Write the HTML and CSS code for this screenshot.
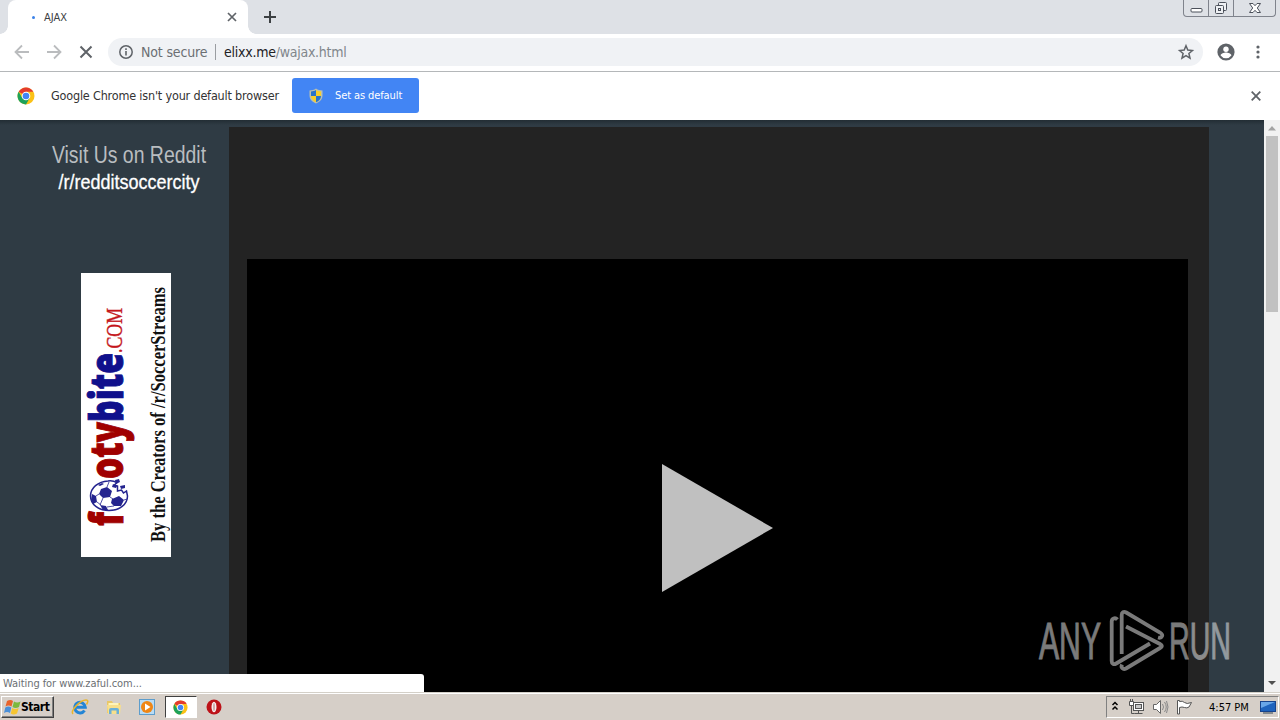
FILE: index.html
```html
<!DOCTYPE html>
<html lang="en">
<head>
    <meta charset="UTF-8">
    <title>AJAX</title>
    <link rel="stylesheet" href="styles.css">
</head>
<body>
    <!-- Tabs -->
    <div class="tabstrip">
        <div class="tab">
            <span class="spinner"></span>
            <span class="tab-title">AJAX</span>
            <svg class="tab-close" width="10" height="10" viewBox="0 0 10 10"><path d="M1 1l8 8M9 1L1 9" stroke="#5f6368" stroke-width="1.7"/></svg>
        </div>
        <svg class="new-tab" width="12" height="12" viewBox="0 0 12 12"><path d="M6 0v12M0 6h12" stroke="#3c4043" stroke-width="2"/></svg>
        <div class="window-buttons">
            <span><svg width="13" height="16" viewBox="0 0 13 16"><rect x="1" y="8.5" width="11" height="3.5" rx="1" fill="#fff" stroke="#4b505a"/></svg></span>
            <span><svg width="14" height="16" viewBox="0 0 14 16"><g fill="#eef0f3" stroke="#4b505a"><rect x="4.500" y="2.500" width="8" height="8" rx="1"/><rect x="1.500" y="5.500" width="8" height="8" rx="1"/><rect x="4.500" y="8.500" width="2" height="2"/></g></svg></span>
            <span class="wide"><svg width="12" height="16" viewBox="0 0 12 16"><path d="M.5 3.500h3.500L6 5.700l2-2.200h3.500L8.300 8l3.200 4.500H8L6 10.300l-2 2.200H.5L3.700 8z" fill="#fff" stroke="#4b505a"/></svg></span>
        </div>
    </div>

    <!-- Toolbar -->
    <div class="toolbar">
        <svg class="nav" width="16" height="16" viewBox="0 0 16 16"><path d="M15 8H2M8 1.500L1.500 8 8 14.500" fill="none" stroke="#babcbe" stroke-width="1.800"/></svg>
        <svg class="nav" width="16" height="16" viewBox="0 0 16 16"><path d="M1 8h13M8 1.500L14.500 8 8 14.500" fill="none" stroke="#babcbe" stroke-width="1.800"/></svg>
        <svg class="nav" width="16" height="16" viewBox="0 0 16 16"><path d="M2.500 2.500l11 11M13.500 2.500l-11 11" stroke="#5f6368" stroke-width="2"/></svg>
        <div class="omnibox">
            <svg width="14" height="14" viewBox="0 0 14 14"><circle cx="7" cy="7" r="6.200" fill="none" stroke="#5f6368" stroke-width="1.500"/><path d="M7 6v4.500M7 3.300v1.600" stroke="#5f6368" stroke-width="1.600"/></svg>
            <span class="secure">Not secure</span>
            <span class="divider"></span>
            <span class="url"><b>elixx.me</b>/wajax.html</span>
            <svg class="star" width="16" height="16" viewBox="0 0 16 16"><path d="M8 1.800l1.800 4.300 4.600.4-3.500 3 1.100 4.600L8 11.600l-4 2.500 1.100-4.600-3.500-3 4.600-.4z" fill="none" stroke="#5f6368" stroke-width="1.500"/></svg>
        </div>
        <svg class="avatar" width="18" height="18" viewBox="0 0 18 18"><circle cx="9" cy="9" r="8.600" fill="#5f6368"/><circle cx="9" cy="6.300" r="2.700" fill="#fff"/><path d="M3.600 12.500c0-2 3.600-3 5.400-3s5.400 1 5.400 3A6.600 6.600 0 0 1 9 15.200a6.600 6.600 0 0 1-5.400-2.700z" fill="#fff"/></svg>
        <svg class="dots" width="4" height="14" viewBox="0 0 4 14"><g fill="#5f6368"><circle cx="2" cy="2" r="1.600"/><circle cx="2" cy="7" r="1.600"/><circle cx="2" cy="12" r="1.600"/></g></svg>
    </div>

    <!-- Default browser prompt -->
    <div class="infobar">
        <svg width="18" height="18" viewBox="0 0 18 18">
            <circle cx="9" cy="9" r="8.500" fill="#fbc116"/>
            <path d="M9 9L1.640 4.750A8.500 8.500 0 0 1 16.360 4.750L9 4.750z" fill="#e33b2e"/>
            <path d="M9 9L5.300 11.100 1.640 4.750A8.500 8.500 0 0 0 9 17.500l3.700-6.400z" fill="#1da25a"/>
            <circle cx="9" cy="9" r="4.300" fill="#fff"/><circle cx="9" cy="9" r="3.300" fill="#4285f4"/>
        </svg>
        <span class="infobar-text">Google Chrome isn't your default browser</span>
        <div class="default-button">
            <svg width="14" height="16" viewBox="0 0 14 16">
                <path d="M7 .5c2 1.400 4 1.900 6.500 2v5c0 3.500-2.500 6.500-6.500 8-4-1.500-6.500-4.500-6.500-8v-5C3 2.400 5 1.900 7 .5z" fill="#b9bfb0"/>
                <path d="M7 2v6H2V3.500C4 3.400 5.500 3 7 2zM7 8h5c0 3-2 5-5 6.300z" fill="#2873c9"/>
                <path d="M7 2v6h5V3.500C10 3.400 8.500 3 7 2zM7 8H2c0 3 2 5 5 6.300z" fill="#f7ce29"/>
            </svg>
            <span>Set as default</span>
        </div>
        <svg class="infobar-close" width="10" height="10" viewBox="0 0 10 10"><path d="M.7.7l8.600 8.600M9.300.7L.7 9.300" stroke="#5f6368" stroke-width="1.800"/></svg>
    </div>

    <!-- Page content -->
    <div class="page">
        <div class="sidebar">
            <div class="visit">Visit Us on Reddit</div>
            <div class="subreddit">/r/redditsoccercity</div>
            <svg class="banner" width="90" height="284" viewBox="0 0 90 284">
                <rect width="90" height="284" fill="#fff"/>
                <g transform="rotate(-90)" class="logo-text">
                    <text class="red" x="-253" y="42" textLength="14" lengthAdjust="spacingAndGlyphs">f</text>
                    <text class="red" x="-206" y="42" textLength="57" lengthAdjust="spacingAndGlyphs">oty</text>
                    <text class="blue" x="-149" y="42" textLength="69" lengthAdjust="spacingAndGlyphs">bite</text>
                    <text class="com" x="-80" y="41" textLength="45" lengthAdjust="spacingAndGlyphs">.COM</text>
                    <text class="tagline" x="-269" y="84" textLength="255" lengthAdjust="spacingAndGlyphs">By the Creators of /r/SoccerStreams</text>
                </g>
                <!-- bitten football -->
                <path d="M36 209.500C33 208 30 207.500 27 208c-10 .5-17.500 7-17.500 15 0 8.500 8 14.500 18.500 14.500s18.500-6 18.500-14.500l-1-5-3 2-2-3-4 1v-5l-3-1z" fill="#fff" stroke="#24248f" stroke-width="1.500"/>
                <path d="M20 216l6-2 5 4-2 6-7 1-4-4zM11 221l4 2 1 6-4 2-2-4zM31 226l7-3 5 4-3 6-7 0-3-3zM19 232l6 1 2 4-5 0zM17 212l4-2 2 1-4 2z" fill="#24248f"/>
                <path d="M18 221l-3 2M29 224l3 2M22 225l-3 7M43 227l3-1M16 229l4 3M33 233l-7 1M26 214l2-5" stroke="#24248f" stroke-width=".8"/>
                <path d="M34 207l4-1 1 3-4 2zM39 213l5-1v3l-4 1zM32 211l4 2-1 2-4-1z" fill="#24248f"/>
            </svg>
        </div>
        <div class="main">
            <div class="player">
                <svg width="111" height="128" viewBox="0 0 111 128"><path d="M0 0l111 64L0 128z" fill="#c0c0c0"/></svg>
            </div>
        </div>
        <div class="scrollbar">
            <svg width="16" height="16" viewBox="0 0 16 16"><path d="M4 10.500l4-4.500 4 4.500z" fill="#a3a3a3"/></svg>
            <div class="thumb"></div>
            <svg class="down" width="16" height="16" viewBox="0 0 16 16"><path d="M4 5l4 4 4-4z" fill="#505050"/></svg>
        </div>
        <div class="status">Waiting for www.zaful.com...</div>
        <svg class="watermark" width="194" height="64" viewBox="0 0 194 64">
            <text x="1" y="50" textLength="62" lengthAdjust="spacingAndGlyphs">ANY</text>
            <text x="131" y="50" textLength="62" lengthAdjust="spacingAndGlyphs">RUN</text>
            <path d="M79.500 10.500c-2.500-2.500-5.800-1-5.800 2V52c0 3 2 4 4.500 2.500L112 34.500M83.700 45V6c0-3 2-4 4.500-2.500L122 23.500c4 2.500 2 6-2 5M88 17.500l34 17.500c2.500 1.300 2.500 2.500 0 4L88 59.500c-3 1.500-5.500-1-4-4" fill="none" stroke="#fff" stroke-width="3.800"/>
        </svg>
    </div>

    <!-- Taskbar -->
    <div class="taskbar">
        <div class="start">
            <svg width="17" height="16" viewBox="0 0 17 16">
                <path d="M3 2q3.500-2 6 0L7.500 7.500q-3-2-6 0z" fill="#e8632b"/><path d="M10 2.500q3 2 6.500 0L15 8q-3.500 2-6.500 0z" fill="#7cb93e"/>
                <path d="M1.300 8.500q3-2 6 0L6 14q-3-2-6 0z" fill="#4a8fd8"/><path d="M8.200 9q3 2 6.500 0L13 14.500q-3.500 2-6.300 0z" fill="#f6c531"/>
            </svg>
            <span>Start</span>
        </div>
        <div class="task">
            <svg width="18" height="18" viewBox="0 0 18 18"><path d="M13.500 12.500A5.300 5.300 0 1 1 14.300 9.300H5" fill="none" stroke="#2385d5" stroke-width="3"/><path d="M2 16C-1 13 9 2 15 2c3 0 1.500 3 .5 4.500" fill="none" stroke="#e9b52c" stroke-width="1.500"/></svg>
        </div>
        <div class="task">
            <svg width="18" height="18" viewBox="0 0 18 18"><path d="M2 3h5l1 2h7v10H2z" fill="#e9c767"/><path d="M3.500 5h10v5h-10z" fill="#fff4b8"/><path d="M2 7h14l-1 9H3z" fill="#f8df8b"/><path d="M4 16v-4q0-2 2-2h6q2 0 2 2v4h-2.500v-3.500h-5V16z" fill="#69afd8"/></svg>
        </div>
        <div class="task">
            <svg width="18" height="18" viewBox="0 0 18 18"><rect x="1.500" y="1.500" width="15" height="15" fill="#b9dcf5" stroke="#5d9dcc"/><circle cx="9" cy="9" r="6" fill="#ef8615"/><path d="M7 5.500L12.500 9 7 12.500z" fill="#fff"/></svg>
        </div>
        <div class="task active">
            <svg width="15" height="15" viewBox="0 0 18 18">
                <circle cx="9" cy="9" r="8.500" fill="#fbc116"/>
                <path d="M9 9L1.640 4.750A8.500 8.500 0 0 1 16.360 4.750L9 4.750z" fill="#e33b2e"/>
                <path d="M9 9L5.300 11.100 1.640 4.750A8.500 8.500 0 0 0 9 17.500l3.700-6.400z" fill="#1da25a"/>
                <circle cx="9" cy="9" r="4.300" fill="#fff"/><circle cx="9" cy="9" r="3.300" fill="#4285f4"/>
            </svg>
        </div>
        <div class="task">
            <svg width="18" height="18" viewBox="0 0 18 18"><circle cx="9" cy="9" r="7.500" fill="#bd1218"/><ellipse cx="9" cy="9" rx="2.500" ry="5.300" fill="#f6eeee"/><ellipse cx="9" cy="9" rx="1" ry="4" fill="#cfa9a9"/></svg>
        </div>
        <div class="tray">
            <svg width="8" height="12" viewBox="0 0 8 12"><path d="M1.500 4L4 1.500 6.500 4M1.500 8.500L4 6l2.500 2.500" fill="none" stroke="#000" stroke-width="1.500"/></svg>
            <svg class="net" width="17" height="16" viewBox="0 0 17 16"><g fill="#fff" stroke="#555"><rect x="5.500" y="3.500" width="10" height="8"/><rect x="7.500" y="5.500" width="6" height="4" fill="#c8c8c8"/><path d="M6.500 14.500h8M10.500 12v2M3.500 6v8.500h3" fill="none"/><path d="M1.500 2.500h4v4h-4zM2.500 0v2.500M4.500 0v2.500"/></g></svg>
            <svg class="sound" width="17" height="16" viewBox="0 0 17 16"><path d="M1.500 5.500h3l4-4v13l-4-4h-3z" fill="#fff" stroke="#666"/><path d="M10.500 5q2 3 0 6M12.500 3q3.500 5 0 10M14.500 2q3 6 0 12" fill="none" stroke="#888"/></svg>
            <svg class="flag" width="17" height="16" viewBox="0 0 17 16"><path d="M1.500 15V1.500h2v1q3-1 5 1t7 0l-2.500 4.500q-2 1.500-4.500.5t-5 0V15z" fill="#fff" stroke="#555"/></svg>
            <span class="clock">4:57 PM</span>
            <svg class="desktop" width="16" height="14" viewBox="0 0 16 14"><rect x=".5" y="1.500" width="15" height="10" fill="#1e63bd" stroke="#17438c"/><path d="M1 2h14L1 8z" fill="#68a6e8"/><path d="M3 13h10" stroke="#345"/></svg>
        </div>
    </div>
</body>
</html>
```
FILE: styles.css
```css
body {
    margin: 0;
    width: 1280px;
    height: 720px;
    overflow: hidden;
    display: flex;
    flex-direction: column;
    background: #fff;
    font-family: "DejaVu Sans Condensed", "DejaVu Sans", sans-serif;
    font-size: 11px;
    white-space: nowrap;
}

svg {
    display: block;
    flex: none;
    overflow: visible;
}

/* tabs */
.tabstrip {
    display: flex;
    height: 34px;
    background: #dee1e6;
    flex: none;
}

.tab {
    position: relative;
    display: flex;
    align-items: center;
    box-sizing: border-box;
    width: 240px;
    margin-left: 8px;
    padding: 0 11px 0 24px;
    background: #fff;
    border-radius: 8px 8px 0 0;
}

/* flared feet of the active tab */
.tab::before,
.tab::after {
    content: "";
    position: absolute;
    bottom: 0;
    width: 8px;
    height: 8px;
}

.tab::before {
    left: -8px;
    background: radial-gradient(circle at 0 0, transparent 7.5px, #fff 8px);
}

.tab::after {
    right: -8px;
    background: radial-gradient(circle at 100% 0, transparent 7.5px, #fff 8px);
}

.spinner {
    width: 3px;
    height: 3px;
    border-radius: 50%;
    background: #3b82e8;
}

.tab-title {
    margin-left: 9px;
    font-size: 11px;
    color: #3c4043;
}

.tab-close {
    margin-left: auto;
}

.new-tab {
    margin: 11px 0 0 16px;
}

.window-buttons {
    display: flex;
    box-sizing: border-box;
    width: 93px;
    height: 17px;
    margin: 0 4px 0 auto;
    border: 1px solid #7f838c;
    border-top: 0;
    border-radius: 0 0 4px 4px;
}

.window-buttons span {
    display: flex;
    justify-content: center;
    width: 24px;
    border-right: 1px solid #7f838c;
}

.window-buttons .wide {
    flex: 1;
    border: 0;
}

/* toolbar */
.toolbar {
    display: flex;
    align-items: center;
    box-sizing: border-box;
    height: 38px;
    padding: 0 20px 1px 14px;
    border-bottom: 1px solid #b4b7b9;
    flex: none;
}

.nav {
    margin-right: 16px;
}

.omnibox {
    display: flex;
    align-items: center;
    box-sizing: border-box;
    width: 1095px;
    height: 28px;
    margin-left: -2px;
    padding: 0 9px 0 11px;
    border-radius: 14px;
    background: #f0f2f5;
    font-size: 14px;
    color: #6b6f73;
}

.secure {
    width: 67px;
    margin-left: 8px;
    letter-spacing: -0.15px;
}

.divider {
    width: 1px;
    height: 16px;
    margin: 0 8px 0 7px;
    background: #9a9da1;
}

.url {
    letter-spacing: -0.25px;
    color: #80868b;
}

.url b {
    font-weight: normal;
    color: #202124;
}

.star {
    margin-left: auto;
}

.avatar {
    margin-left: 14px;
}

.dots {
    margin-left: 21px;
}

/* infobar */
.infobar {
    display: flex;
    align-items: center;
    box-sizing: border-box;
    height: 48px;
    padding: 0 19px 1px 17px;
    flex: none;
}

.infobar-text {
    width: 228px;
    margin: 0 13px 0 16px;
    font-size: 12.500px;
    letter-spacing: -0.18px;
    color: #333;
}

.default-button {
    display: flex;
    align-items: center;
    gap: 12px;
    box-sizing: border-box;
    width: 127px;
    height: 35px;
    padding-left: 17px;
    border-radius: 3px;
    background: #4285f4;
    color: #fff;
    font-size: 11px;
    letter-spacing: -0.1px;
}

.infobar-close {
    margin-left: auto;
}

/* page */
.page {
    position: relative;
    display: flex;
    height: 572px;
    background: linear-gradient(#222d34, #2f3b44 5px);
    flex: none;
}

.sidebar {
    box-sizing: border-box;
    width: 229px;
    padding: 22px 0 0 29px;
    font-family: "Liberation Sans", Arial, sans-serif;
    text-align: center;
}

.visit {
    height: 27px;
    line-height: 26px;
    font-size: 23px;
    color: #b9bdc0;
    transform: scaleX(0.845);
}

.subreddit {
    height: 27px;
    line-height: 27px;
    font-size: 20px;
    color: #fff;
    transform: scaleX(0.9);
    -webkit-text-stroke: 0.3px #fff;
}

.banner {
    margin: 77px 0 0 52px;
}

.logo-text text {
    font: 800 46px "Open Sans", sans-serif;
}

.logo-text .red {
    fill: #a00000;
    stroke: #a00000;
}

.logo-text .blue {
    fill: #10108c;
    stroke: #10108c;
}

.logo-text .com {
    font: 24px "Liberation Serif", serif;
    fill: #c4161c;
    stroke: #c4161c;
    stroke-width: 0.4px;
}

.logo-text .tagline {
    font: bold 22px "Liberation Serif", serif;
    fill: #111;
}

.main {
    box-sizing: border-box;
    width: 980px;
    height: 565px;
    margin-top: 7px;
    padding: 132px 21px 0 18px;
    background: #232323;
}

.player {
    box-sizing: border-box;
    height: 433px;
    padding: 205px 0 0 415px;
    background: #000;
}

.scrollbar {
    display: flex;
    flex-direction: column;
    width: 16px;
    margin-left: auto;
    background: #f1f1f1;
}

.thumb {
    width: 12px;
    height: 176px;
    margin-left: 2px;
    background: #c1c1c1;
}

.down {
    margin-top: auto;
}

.status {
    position: absolute;
    left: 0;
    bottom: 0;
    box-sizing: border-box;
    width: 424px;
    height: 18px;
    padding-left: 3px;
    border-radius: 0 3px 0 0;
    background: #fff;
    line-height: 19px;
    letter-spacing: -0.07px;
    color: #6b6f73;
}

.watermark {
    position: absolute;
    left: 1038px;
    top: 489px;
    opacity: 0.48;
}

.watermark text {
    font: 51px "Liberation Sans", Arial, sans-serif;
    fill: #fff;
    stroke: #fff;
    stroke-width: 0.9px;
}

/* taskbar */
.taskbar {
    display: flex;
    align-items: center;
    box-sizing: border-box;
    height: 28px;
    padding: 1px 1px 0 1px;
    border-top: 1px solid #d4d0c8;
    background: linear-gradient(#fff 1px, #d6cfc8 1px);
    flex: none;
}

.start {
    display: flex;
    align-items: center;
    box-sizing: border-box;
    width: 53px;
    height: 22px;
    margin-right: 10px;
    padding-left: 2px;
    border: 1px solid;
    border-color: #fff #404040 #404040 #fff;
    box-shadow: inset -1px -1px #808080;
    font-size: 12px;
    font-weight: bold;
    letter-spacing: -0.45px;
}

.task {
    display: flex;
    align-items: center;
    justify-content: center;
    box-sizing: border-box;
    width: 32px;
    height: 22px;
    margin-right: 1.600px;
}

.active {
    border: 1px solid;
    border-color: #404040 #fff #fff #404040;
    background: #fff;
}

.tray {
    display: flex;
    align-items: center;
    box-sizing: border-box;
    width: 173px;
    height: 22px;
    margin-left: auto;
    padding: 0 2px 0 4px;
    border: 1px solid;
    border-color: #808080 #fff #fff #808080;
}

.net {
    margin-left: 9px;
}

.sound, .flag {
    margin-left: 7px;
}

.clock {
    margin-left: 16px;
}

.desktop {
    margin-left: auto;
}
```
